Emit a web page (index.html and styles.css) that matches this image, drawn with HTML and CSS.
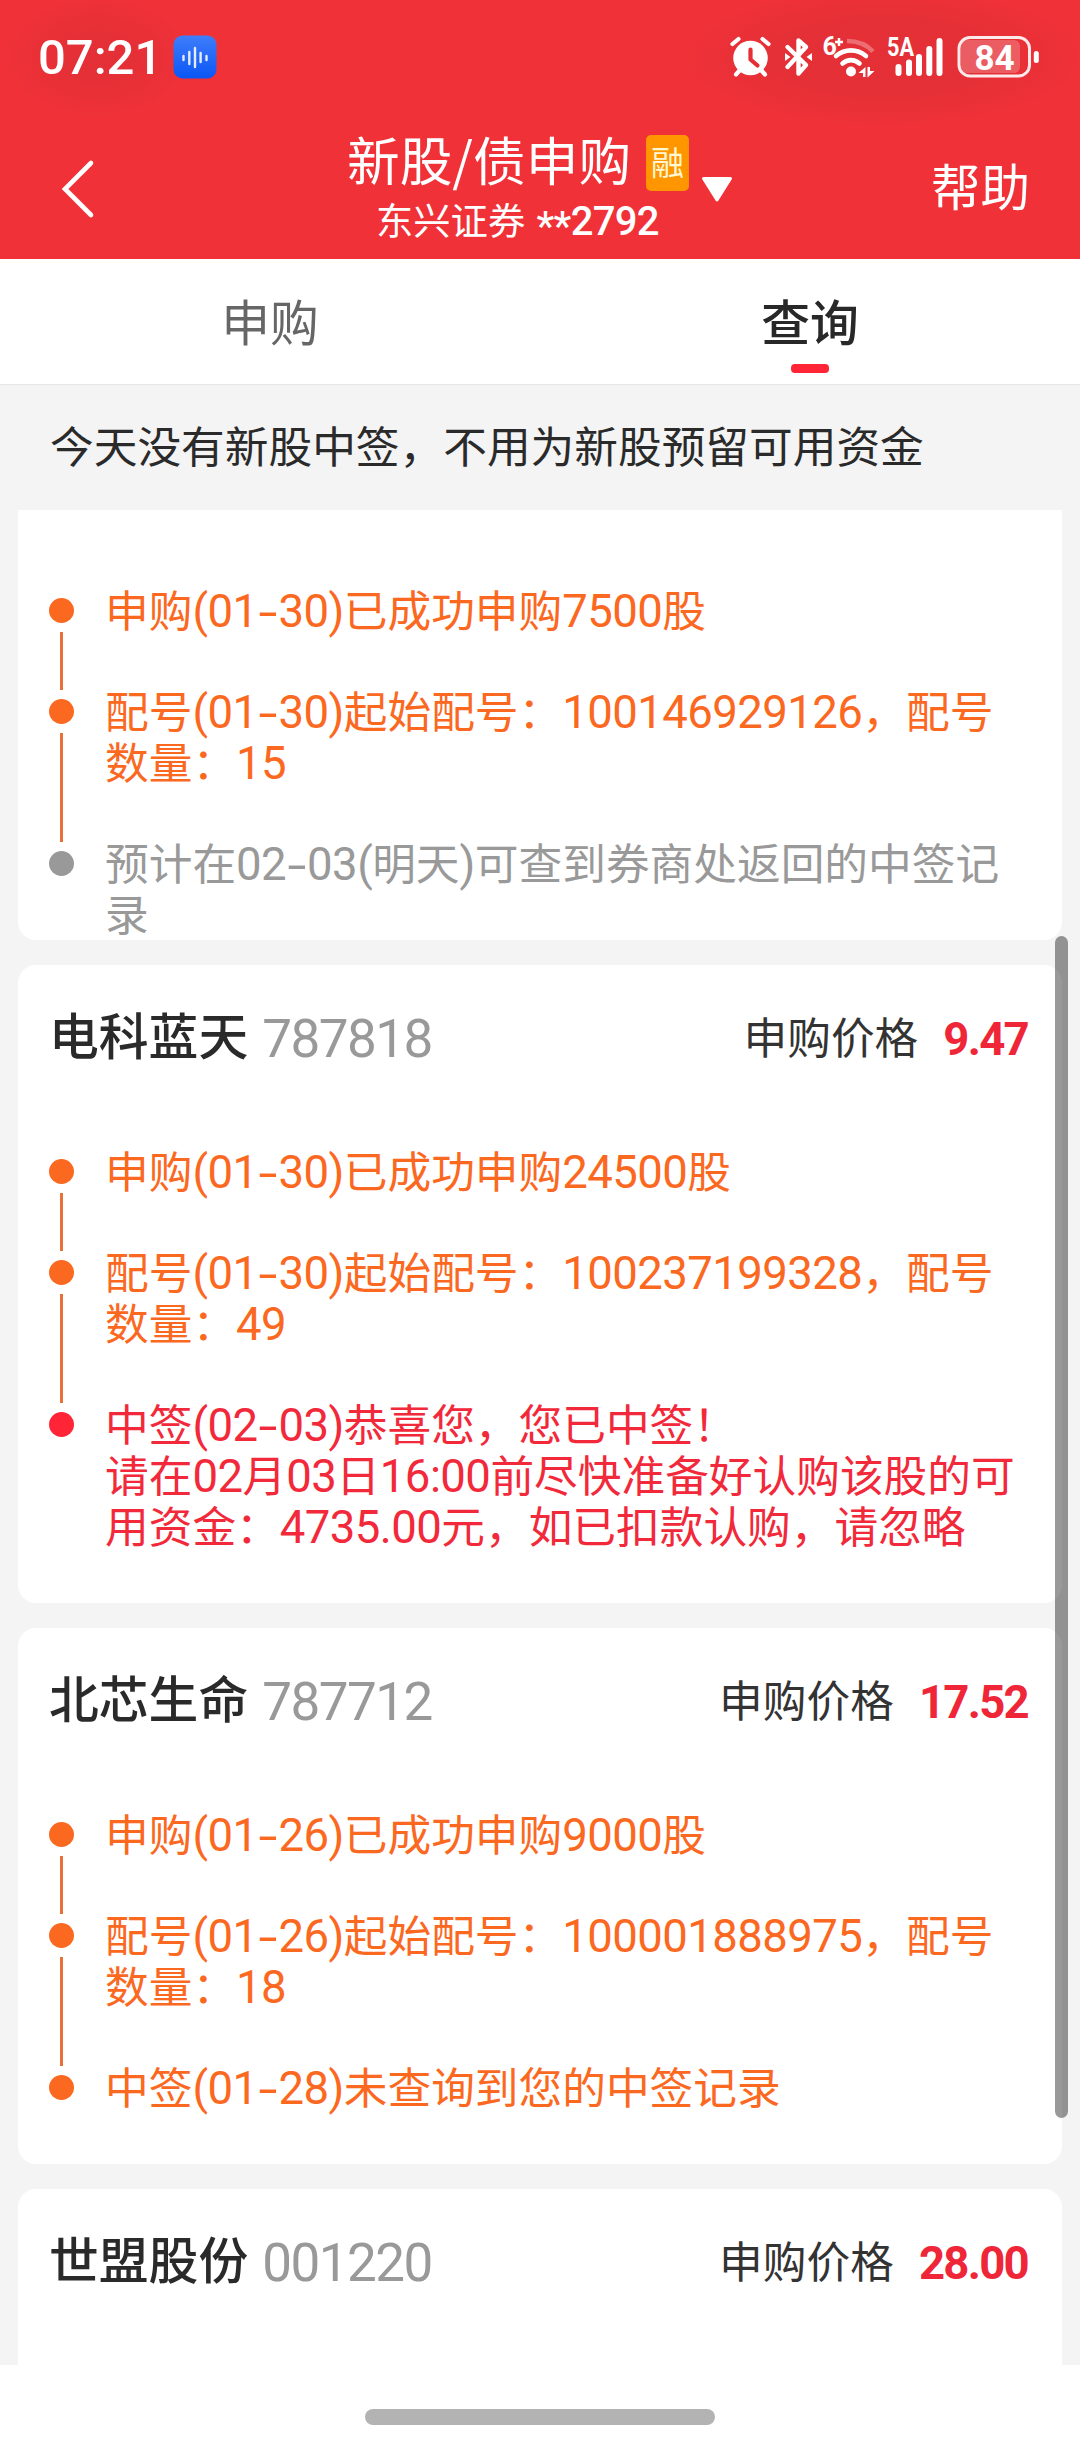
FILE: index.html
```html
<!DOCTYPE html>
<html lang="zh-CN">
<head>
<meta charset="utf-8">
<title>新股/债申购</title>
<link rel="stylesheet" href="styles.css">
</head>
<body>
<div class="app">
  <header class="top">
    <div class="status">
      <div class="clock">07:21</div>
      <svg class="app-badge" width="44" height="44" viewBox="0 0 44 44">
        <defs><linearGradient id="blue" x1="0" y1="0" x2="0" y2="1"><stop offset="0" stop-color="#3f7dfb"/><stop offset="1" stop-color="#0a56f5"/></linearGradient></defs>
        <rect x="0.5" y="0.5" width="43" height="43" rx="9" fill="url(#blue)"/>
        <path d="M10.5 21v4M16.3 17v12M22 13v19M27.6 18v9M33.5 21v4" stroke="#e4edff" stroke-width="2.4" stroke-linecap="round"/>
      </svg>
      <div class="indicators">
        <svg class="alarm" width="42" height="44" viewBox="730 35 42 44">
          <circle cx="750.5" cy="58" r="17.3" fill="#fff"/>
          <path d="M732.5 44l6-5M768.5 44l-6-5M740 70l-4 4.500M761 70l4 4.500" stroke="#fff" stroke-width="4.200" stroke-linecap="round"/>
          <path d="M750.500 49.500v10l7 6" fill="none" stroke="#e62e35" stroke-width="4.200" stroke-linecap="round" stroke-linejoin="round"/>
        </svg>
        <svg class="bluetooth" width="30" height="44" viewBox="783 35 30 44">
          <path d="M787.500 47l18.500 18-7.500 8.500v-33l7.500 6.500-18.500 20" fill="none" stroke="#fff" stroke-width="4.400" stroke-linecap="round" stroke-linejoin="round"/>
          <path d="M785 53l5.500 4-5.500 4zM812 53l-5.500 4 5.500 4z" fill="#fff"/>
        </svg>
        <svg class="wifi" width="54" height="46" viewBox="822 33 54 46">
          <text class="mini" x="822.500" y="53.500" font-size="25">6</text>
          <path d="M839 37v8M835 41h8" stroke="#fff" stroke-width="2.500"/>
          <path d="M847 40c11 0 20 4 26 10.500" fill="none" stroke="#fff" stroke-opacity=".3" stroke-width="4.500"/>
          <path d="M836 55c9-7.500 21-7.500 30 0M842.500 62.500c5-4.500 12-4.500 17 0" fill="none" stroke="#fff" stroke-width="4.600" stroke-linecap="round"/>
          <circle cx="851" cy="70.500" r="5" fill="#fff"/>
          <path d="M858.500 72l7-6v10h-2.500v-4zM874.500 70l-7 6.500v-10.500h2.500v4z" fill="#fff"/>
        </svg>
        <svg class="signal" width="56" height="44" viewBox="887 35 56 44">
          <text class="mini" x="887" y="56" font-size="25" textLength="27" lengthAdjust="spacingAndGlyphs">5A</text>
          <path d="M898.500 67v6M909 62.500v10.500M919 57v16M929.300 49v24M939.500 41v32" stroke="#fff" stroke-width="6" stroke-linecap="round"/>
        </svg>
        <svg class="battery" width="84" height="44" viewBox="956 35 84 44">
          <rect x="961" y="40" width="59" height="33" rx="6" fill="#fff" fill-opacity=".22"/>
          <rect x="959" y="37.500" width="70.500" height="38.500" rx="11" fill="none" stroke="#fff" stroke-opacity=".9" stroke-width="3"/>
          <path d="M1036.300 53.500v7" stroke="#fff" stroke-width="5" stroke-linecap="round"/>
          <text class="level" x="994.500" y="69.500" font-size="35" text-anchor="middle">84</text>
        </svg>
      </div>
    </div>
    <nav class="bar">
      <svg class="back" width="34" height="62" viewBox="0 0 34 62"><path d="M30 4L4 30l26 26" fill="none" stroke="#fff" stroke-width="4.600" stroke-linecap="round"/></svg>
      <div class="account">
        <div class="names">
          <div class="title">新股/债申购</div>
          <div class="broker">东兴证券 <span class="acct"><span class="mask">**</span>2792</span></div>
        </div>
        <span class="margin-tag">融</span>
        <svg class="caret" width="32" height="27" viewBox="0 0 32 27"><path d="M2.500 2.500h27L16 24z" fill="#fff" stroke="#fff" stroke-width="3" stroke-linejoin="round"/></svg>
      </div>
      <div class="help">帮助</div>
    </nav>
  </header>

  <div class="tabs">
    <div class="tab">申购</div>
    <div class="tab active">查询</div>
  </div>

  <div class="notice">今天没有新股中签，不用为新股预留可用资金</div>

  <main class="list">
    <section class="card first">
      <ol class="steps">
        <li class="step"><i class="dot"></i><p>申购<span class="num">(01<span class="dash">-</span>30)</span>已成功申购<span class="num">7500</span>股</p></li>
        <li class="step"><i class="dot"></i><p>配号<span class="num">(01<span class="dash">-</span>30)</span>起始配号：<span class="num">100146929126</span>，配号数量：<span class="num">15</span></p></li>
        <li class="step pending"><i class="dot"></i><p>预计在<span class="num">02<span class="dash">-</span>03(</span>明天<span class="num">)</span>可查到券商处返回的中签记录</p></li>
      </ol>
    </section>

    <section class="card">
      <div class="head"><h2>电科蓝天</h2><span class="code">787818</span><span class="label">申购价格</span><b class="price">9.47</b></div>
      <ol class="steps">
        <li class="step"><i class="dot"></i><p>申购<span class="num">(01<span class="dash">-</span>30)</span>已成功申购<span class="num">24500</span>股</p></li>
        <li class="step"><i class="dot"></i><p>配号<span class="num">(01<span class="dash">-</span>30)</span>起始配号：<span class="num">100237199328</span>，配号数量：<span class="num">49</span></p></li>
        <li class="step won"><i class="dot"></i><p>中签<span class="num">(02<span class="dash">-</span>03)</span>恭喜您，您已中签！<br>请在<span class="num">02</span>月<span class="num">03</span>日<span class="num">16:00</span>前尽快准备好认购该股的可用资金：<span class="num">4735.00</span>元，如已扣款认购，请忽略</p></li>
      </ol>
    </section>

    <section class="card">
      <div class="head"><h2>北芯生命</h2><span class="code">787712</span><span class="label">申购价格</span><b class="price">17.52</b></div>
      <ol class="steps">
        <li class="step"><i class="dot"></i><p>申购<span class="num">(01<span class="dash">-</span>26)</span>已成功申购<span class="num">9000</span>股</p></li>
        <li class="step"><i class="dot"></i><p>配号<span class="num">(01<span class="dash">-</span>26)</span>起始配号：<span class="num">100001888975</span>，配号数量：<span class="num">18</span></p></li>
        <li class="step"><i class="dot"></i><p>中签<span class="num">(01<span class="dash">-</span>28)</span>未查询到您的中签记录</p></li>
      </ol>
    </section>

    <section class="card last">
      <div class="head"><h2>世盟股份</h2><span class="code">001220</span><span class="label">申购价格</span><b class="price">28.00</b></div>
    </section>
  </main>

  <footer class="gesture"><div class="pill"></div></footer>
  <div class="scrollbar"></div>
</div>
</body>
</html>
```
FILE: styles.css
```css
* { box-sizing: border-box; }
body, h2, p, ol { margin: 0; padding: 0; }
body {
  font-family: "Noto Sans CJK SC", sans-serif;
  font-size: 43.7px;
  color: #2a2a2a;
  background: #fff;
}
svg { overflow: visible; }
.app {
  position: relative;
  display: flex;
  flex-direction: column;
  width: 1080px;
  height: 2444px;
  overflow: hidden;
}

/* header */
.top {
  height: 259px;
  color: #fff;
  background:
    radial-gradient(ellipse 95px 62px at 98px 57px, rgba(200, 44, 50, .3) 30%, transparent 100%),
    radial-gradient(ellipse 205px 70px at 885px 57px, rgba(200, 44, 50, .3) 50%, transparent 100%),
    #f03138;
}
.status { display: flex; align-items: center; height: 114px; padding: 0 40px 0 38px; }
.clock { width: 135px; padding-top: 1px; font: 500 49px/1 Roboto, sans-serif; letter-spacing: 0; }
.indicators { display: flex; align-items: center; margin-left: auto; }
.bluetooth { margin-left: 11px; }
.wifi { margin-left: 9px; }
.signal { margin-left: 11px; }
.battery { margin-left: 13px; }
.mini { font-family: Roboto, sans-serif; font-weight: 700; fill: #fff; }
.level { font-family: Roboto, sans-serif; font-weight: 700; fill: #fff; }

.bar { display: flex; align-items: flex-start; height: 145px; padding-left: 61px; padding-right: 50px; }
.back { margin-top: 45px; }
.account { display: flex; align-items: flex-start; margin-left: 252px; }
.names { width: 285px; }
.title { margin-top: 12px; font-size: 52.700px; line-height: 64px; white-space: nowrap; }
.broker { margin-left: 29px; margin-top: 1px; font-size: 37.300px; line-height: 56px; white-space: nowrap; }
.acct { margin-left: 3px; font-family: Roboto, sans-serif; font-weight: 500; font-size: 40px; line-height: .8; letter-spacing: -.7px; }
.mask { position: relative; top: 5px; }
.margin-tag {
  width: 43px;
  height: 56px;
  margin: 21px 0 0 14px;
  border-radius: 5px;
  background: #ff9600;
  color: #fff8d2;
  font-size: 33px;
  line-height: 52px;
  text-align: center;
}
.caret { margin: 62px 0 0 12px; }
.help { margin-left: auto; margin-top: 36px; font-size: 49.500px; line-height: 70px; }

/* tabs */
.tabs { display: flex; height: 126px; border-bottom: 1px solid #e6e6e6; background: #fff; }
.tab {
  display: flex;
  flex-direction: column;
  align-items: center;
  flex: 1;
  padding-top: 25px;
  color: #666;
  font-size: 48.800px;
  line-height: 72px;
}
.tab.active { color: #282828; font-weight: 500; }
.tab.active::after { content: ""; width: 38px; height: 9px; margin-top: 8px; border-radius: 4px; background: #ff2436; }

.notice { height: 125px; padding-left: 50px; background: #f4f4f4; line-height: 118px; white-space: nowrap; }

/* cards */
.list {
  display: flex;
  flex-direction: column;
  gap: 25.500px;
  height: 1855px;
  padding: 0 18px;
  overflow: hidden;
  background: #f4f4f4;
}
.card { flex: none; padding: 0 34px 51px 31px; border-radius: 18px; background: #fff; }
.card.first { padding-top: 74.500px; padding-bottom: 0; border-radius: 0 0 18px 18px; }
.card.last { height: 300px; }
.head { display: flex; align-items: baseline; height: 180.500px; padding-top: 30px; line-height: 76px; }
.head h2 { font-size: 49.800px; font-weight: 500; }
.code { position: relative; top: 1.500px; margin-left: 14px; color: #999; font-family: Roboto, sans-serif; font-size: 53px; letter-spacing: -1.500px; }
.label { position: relative; top: -1.500px; margin-left: auto; color: #333; }
.price { margin-left: 25px; color: #ee2638; font-family: Roboto, sans-serif; font-weight: 700; font-size: 45.500px; letter-spacing: -1.700px; }

/* timeline */
.steps { display: flex; flex-direction: column; gap: 50px; list-style: none; }
.step { position: relative; display: flex; align-items: flex-start; color: #fb681f; line-height: 51px; }
.step p { width: 923px; margin-left: 31px; margin-top: -2px; margin-bottom: 2px; }
.dot { flex: none; width: 25px; height: 25px; margin-top: 13px; border-radius: 50%; background: currentColor; }
.step:not(:last-child)::after {
  content: "";
  position: absolute;
  left: 11px;
  top: 47px;
  bottom: -54px;
  width: 3px;
  background: #e8713a;
}
.step.pending { color: #999; }
.step.won { color: #f2293a; }
.won .dot { background: #ff2436; }
.num { font-family: Roboto, sans-serif; font-size: 45.500px; line-height: .8; letter-spacing: -.560px; }
.dash { display: inline-block; width: 21px; text-align: center; transform: translateY(1px) scaleX(1.500); }

/* system overlays */
.gesture { display: flex; justify-content: center; flex: 1; padding-top: 44px; background: #fff; }
.pill { width: 350px; height: 16px; border-radius: 8px; background: #b3b3b3; }
.scrollbar { position: absolute; left: 1055px; top: 936px; width: 13px; height: 1182px; border-radius: 7px; background: rgba(0, 0, 0, .4); }
```
